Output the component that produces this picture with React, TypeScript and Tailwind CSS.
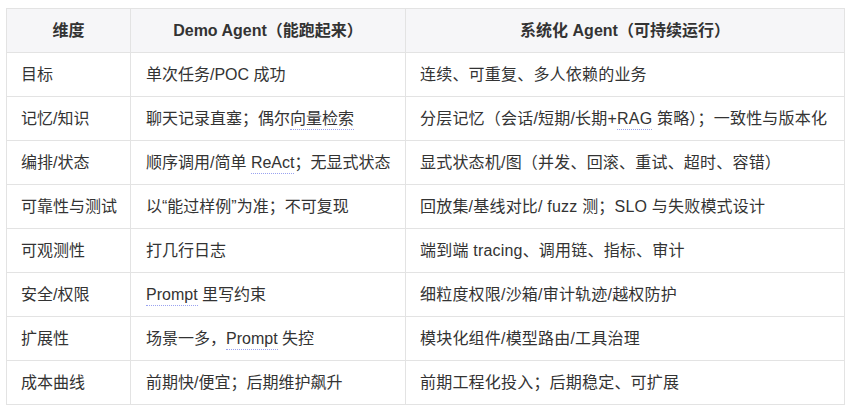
import { ReactNode } from "react"

const Dot = ({ children }: { children: ReactNode }) => (
  <span className="pb-[2px] border-b border-dotted border-[#9aa3f0]">{children}</span>
)

const rows: [string, ReactNode, ReactNode][] = [
  ["目标", "单次任务/POC 成功", "连续、可重复、多人依赖的业务"],
  [
    "记忆/知识",
    <>聊天记录直塞；偶尔<Dot>向量检索</Dot></>,
    <>分层记忆（会话/短期/长期+<Dot>RAG</Dot> 策略）；一致性与版本化</>,
  ],
  [
    "编排/状态",
    <>顺序调用/简单 <Dot>ReAct</Dot>；无显式状态</>,
    "显式状态机/图（并发、回滚、重试、超时、容错）",
  ],
  ["可靠性与测试", "以“能过样例”为准；不可复现", "回放集/基线对比/ fuzz 测；SLO 与失败模式设计"],
  ["可观测性", "打几行日志", "端到端 tracing、调用链、指标、审计"],
  ["安全/权限", <><Dot>Prompt</Dot> 里写约束</>, "细粒度权限/沙箱/审计轨迹/越权防护"],
  ["扩展性", <>场景一多，<Dot>Prompt</Dot> 失控</>, "模块化组件/模型路由/工具治理"],
  ["成本曲线", "前期快/便宜；后期维护飙升", "前期工程化投入；后期稳定、可扩展"],
]

export default function App() {
  return (
    <div
      className="w-[851px] h-[411px] bg-white pt-[8px] pl-[6px] text-[16px] text-[#333]"
      style={{ fontFamily: '"Liberation Sans", "Noto Sans CJK SC", sans-serif' }}
    >
      <table className="w-[839px] border-collapse table-fixed">
        <colgroup>
          <col className="w-[124px]" />
          <col className="w-[275px]" />
          <col />
        </colgroup>
        <thead>
          <tr className="h-[44px] bg-[#f6f6f8]">
            <th className="border border-[#e3e3e3] font-bold text-center">维度</th>
            <th className="border border-[#e3e3e3] font-bold text-center">Demo Agent（能跑起来）</th>
            <th className="border border-[#e3e3e3] font-bold text-center">系统化 Agent（可持续运行）</th>
          </tr>
        </thead>
        <tbody>
          {rows.map((r, i) => (
            <tr key={i} className="h-[44px]">
              <td className="border border-[#e3e3e3] pl-[14px] whitespace-nowrap">{r[0]}</td>
              <td className="border border-[#e3e3e3] pl-[15px] whitespace-nowrap">{r[1]}</td>
              <td className="border border-[#e3e3e3] pl-[14px] whitespace-nowrap tracking-[0.2px]">{r[2]}</td>
            </tr>
          ))}
        </tbody>
      </table>
    </div>
  )
}
